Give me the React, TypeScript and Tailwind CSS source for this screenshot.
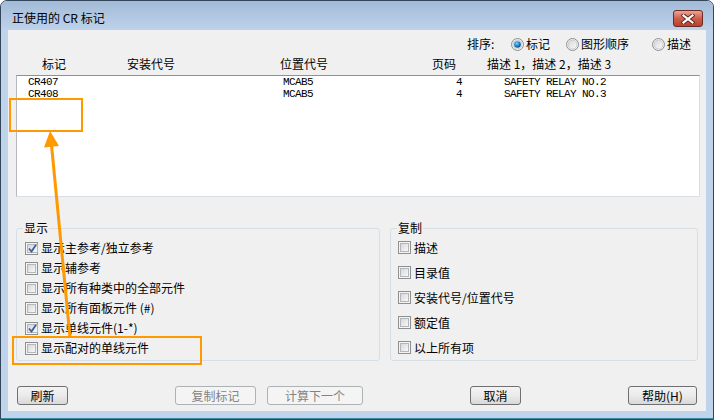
import React from "react";

const cjk = "font-['Noto_Sans_CJK_SC',sans-serif]";

function CheckBox({ on }: { on?: boolean }) {
  return (
    <span className="w-[13px] h-[13px] border border-[#8e8f8f] bg-[#f4f4f4] p-[1px] flex shrink-0">
      <span className="flex-1 flex items-center justify-center border border-[#b3b6ba] bg-gradient-to-br from-[#d6d8db] to-[#f8f8f8]">
        {on && (
          <svg width="9" height="9" viewBox="0 0 9 9">
            <path d="M1 4.5 L3.5 7.5 L8 0.8" fill="none" stroke="#3f5b9e" strokeWidth="1.8" />
          </svg>
        )}
      </span>
    </span>
  );
}

function Radio({ on }: { on?: boolean }) {
  return (
    <svg width="13" height="13" viewBox="0 0 13 13" className="shrink-0">
      <defs>
        <linearGradient id="rb" x1="0" y1="0" x2="1" y2="1">
          <stop offset="0" stopColor="#d3d5d8" />
          <stop offset="1" stopColor="#fbfbfb" />
        </linearGradient>
        <radialGradient id="rd" cx="0.4" cy="0.35" r="0.7">
          <stop offset="0" stopColor="#7fd3ff" />
          <stop offset="0.5" stopColor="#1d8ad6" />
          <stop offset="1" stopColor="#0d3d78" />
        </radialGradient>
      </defs>
      <circle cx="6.5" cy="6.5" r="6" fill="#f4f4f4" stroke="#8e8f8f" />
      <circle cx="6.5" cy="6.5" r="4.5" fill="url(#rb)" stroke="#c2c4c7" strokeWidth="0.8" />
      {on && <circle cx="6.5" cy="6.5" r="3.3" fill="url(#rd)" />}
    </svg>
  );
}

function Btn({ label, w, disabled }: { label: string; w: string; disabled?: boolean }) {
  return (
    <div
      className={
        disabled
          ? `${w} h-[19px] flex items-center justify-center rounded-[3px] border border-[#adb2b5] bg-[#f4f4f4] text-[#838383] text-[12px] leading-[12px] ${cjk}`
          : `${w} h-[19px] flex items-center justify-center rounded-[3px] border border-[#707070] bg-gradient-to-b from-[#f3f3f3] via-[#ebebeb] to-[#d8d8d8] text-black text-[12px] leading-[12px] ${cjk}`
      }
    >
      {label}
    </div>
  );
}

const rows = [
  { tag: "CR407", loc: "MCAB5", page: "4", desc: "SAFETY RELAY NO.2" },
  { tag: "CR408", loc: "MCAB5", page: "4", desc: "SAFETY RELAY NO.3" },
];

const showOpts = [
  { label: "显示主参考/独立参考", on: true },
  { label: "显示辅参考" },
  { label: "显示所有种类中的全部元件" },
  { label: "显示所有面板元件 (#)" },
  { label: "显示单线元件(1-*)", on: true },
  { label: "显示配对的单线元件" },
];

const copyOpts = ["描述", "目录值", "安装代号/位置代号", "额定值", "以上所有项"];

export default function App() {
  return (
    <div className="relative w-[714px] h-[420px] overflow-hidden bg-white">
      <div className="w-full h-full flex flex-col border border-[#34465a] rounded-t-[7px] bg-[#bfd3ea]">
        {/* title bar */}
        <div className="h-[29px] flex rounded-t-[6px] bg-gradient-to-b from-[#a3bbd8] to-[#bed2ea]">
          <div className={`pl-[11px] pt-[11px] text-[12px] leading-[12px] text-black ${cjk}`}>正使用的 CR 标记</div>
          <div className="flex-1" />
          <div className="mt-[9px] mr-[10px] w-[30px] h-[17px] rounded-[3px] border border-[#6b2b24] bg-gradient-to-b from-[#e9a595] via-[#cf5d4b] to-[#b8412f] flex items-center justify-center">
            <svg width="14" height="10" viewBox="0 0 14 10">
              <path d="M2.5 1.5 L11.5 8.5 M11.5 1.5 L2.5 8.5" stroke="#5a241d" strokeWidth="4" strokeLinecap="square" />
              <path d="M2.5 1.5 L11.5 8.5 M11.5 1.5 L2.5 8.5" stroke="#ffffff" strokeWidth="2.2" strokeLinecap="square" />
            </svg>
          </div>
        </div>

        <div className="flex px-[7px]">
          <div className={`w-[698px] h-[381px] bg-[#f0f0f0] flex flex-col text-black ${cjk}`}>
            {/* sort row */}
            <div className="mt-[6px] h-[16px] flex items-center pl-[459px] text-[12px] leading-[12px]">
              <span className="w-[44px]">排序:</span>
              <Radio on />
              <span className="ml-[2px] w-[40px]">标记</span>
              <Radio />
              <span className="ml-[2px] w-[71px]">图形顺序</span>
              <Radio />
              <span className="ml-[2px]">描述</span>
            </div>

            {/* header */}
            <div className="mt-[4px] h-[16px] flex items-center pl-[34px] text-[12px] leading-[12px]">
              <span className="w-[85px]">标记</span>
              <span className="w-[153px]">安装代号</span>
              <span className="w-[152px]">位置代号</span>
              <span className="w-[55px]">页码</span>
              <span>描述 1，描述 2，描述 3</span>
            </div>

            {/* list */}
            <div className="mt-[3px] ml-[8px] w-[684px] h-[122px] bg-white border border-[#dadee5] border-t-[#8d9299] border-l-[#b5b8bd]">
              {rows.map((r) => (
                <div
                  key={r.tag}
                  className="flex h-[12px] items-center pl-[11px] font-['Liberation_Mono',monospace] text-[11px] leading-[12px] tracking-[-0.6px]"
                >
                  <span className="w-[255px]">{r.tag}</span>
                  <span className="w-[173px]">{r.loc}</span>
                  <span className="w-[48px]">{r.page}</span>
                  <span>{r.desc}</span>
                </div>
              ))}
            </div>

            {/* groups */}
            <div className="mt-[25px] flex px-[8px] gap-[10px] text-[12px] leading-[12px]">
              <fieldset className="w-[365px] border border-[#d5dfe5] rounded-[3px]">
                <legend className="ml-[6px] px-[1px] leading-[12px]">显示</legend>
                <div className="pt-[4px] pl-[8px] flex flex-col">
                  {showOpts.map((o) => (
                    <div key={o.label} className="h-[20px] flex items-center">
                      <CheckBox on={o.on} />
                      <span className="ml-[3px]">{o.label}</span>
                    </div>
                  ))}
                </div>
              </fieldset>
              <fieldset className="w-[309px] border border-[#d5dfe5] rounded-[3px]">
                <legend className="ml-[6px] px-[1px] leading-[12px]">复制</legend>
                <div className="pt-[1px] pl-[7px] flex flex-col">
                  {copyOpts.map((o) => (
                    <div key={o} className="h-[25px] flex items-center">
                      <CheckBox />
                      <span className="ml-[3px]">{o}</span>
                    </div>
                  ))}
                </div>
              </fieldset>
            </div>

            {/* buttons */}
            <div className="mt-auto mb-[6px] flex pl-[9px]">
              <Btn label="刷新" w="w-[51px]" />
              <div className="ml-[107px]">
                <Btn label="复制标记" w="w-[81px]" disabled />
              </div>
              <div className="ml-[11px]">
                <Btn label="计算下一个" w="w-[96px]" disabled />
              </div>
              <div className="ml-[107px]">
                <Btn label="取消" w="w-[51px]" />
              </div>
              <div className="ml-[107px]">
                <Btn label="帮助(H)" w="w-[69px]" />
              </div>
            </div>
          </div>
        </div>
        <div className="flex-1 border-b border-[#3b8aa3]" />
      </div>

      {/* annotation overlay */}
      <svg className="absolute inset-0 pointer-events-none" width="714" height="420" viewBox="0 0 714 420">
        <rect x="10" y="99" width="72" height="32" fill="none" stroke="#ff9900" strokeWidth="2" />
        <rect x="13" y="337" width="188" height="27" fill="none" stroke="#ff9900" strokeWidth="2" />
        <line x1="70" y1="337" x2="51.5" y2="145" stroke="#ff9900" strokeWidth="3" />
        <polygon points="50,131 59,146 44,147.6" fill="#ff9900" />
      </svg>
    </div>
  );
}
